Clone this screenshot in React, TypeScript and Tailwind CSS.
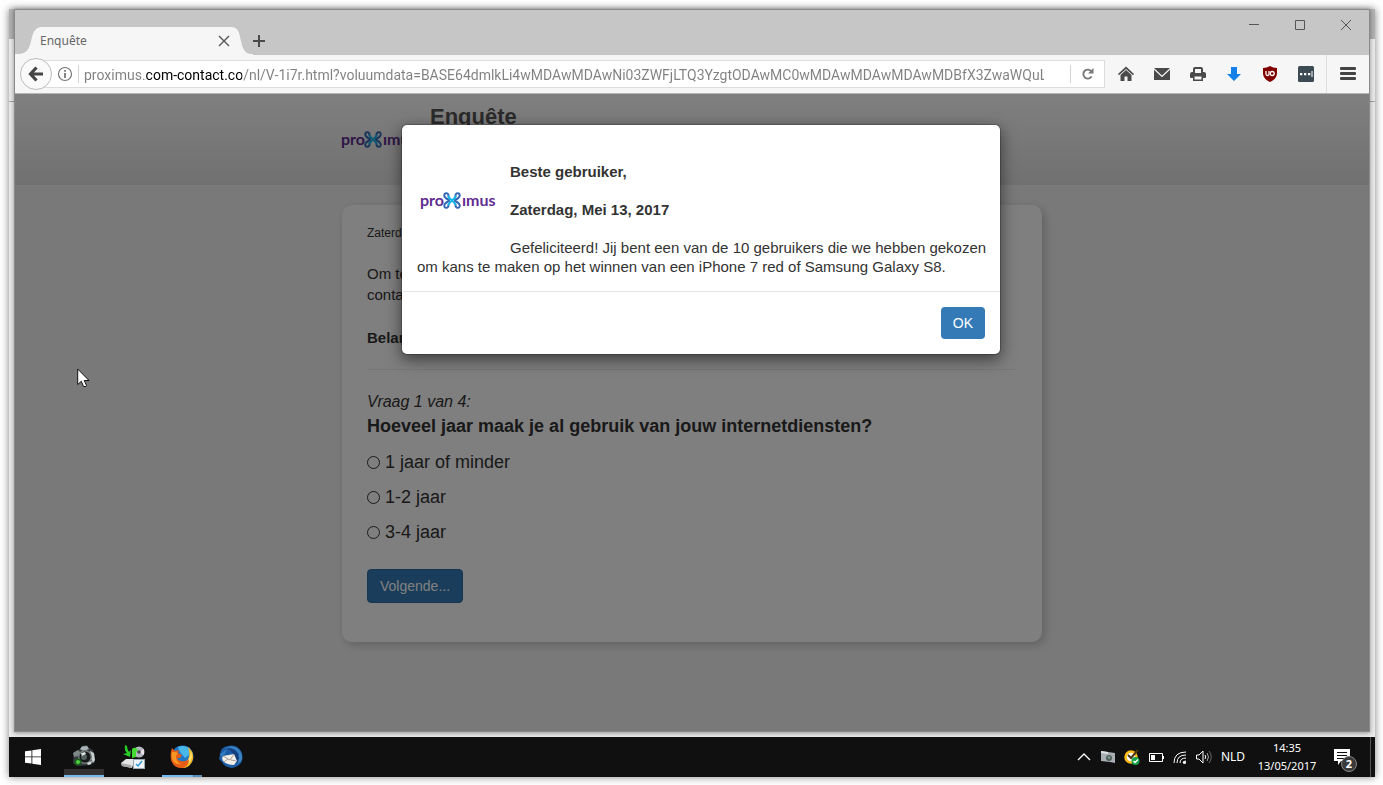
import React from "react";

const URL_TEXT =
  "proximus.com-contact.co/nl/V-1i7r.html?voluumdata=BASE64dmlkLi4wMDAwMDAwNi03ZWFjLTQ3YzgtODAwMC0wMDAwMDAwMDAwMDBfX3ZwaWQuLi4";

function ProximusLogo() {
  return (
    <svg width="80" height="24" viewBox="0 0 80 24" role="img" aria-label="proximus">
      <g fill="#5f2d91" fontFamily="Lato, sans-serif" fontWeight="700" fontSize="16">
        <text x="3" y="17">pro</text>
        <text x="45" y="17">ımus</text>
      </g>
      <g fill="none" strokeWidth="2" strokeLinecap="round" transform="translate(1 -1)">
        <path d="M31 12C27 10 25.500 8 26.500 6.200C28 4.200 31 5.500 30.500 8.500" stroke="#3467b4" />
        <path d="M31 13C27 15 25.500 17 26.500 18.800C28 20.800 31 19.500 30.500 16.500" stroke="#3467b4" />
        <path d="M37 12C41 10 42.500 8 41.500 6.200C40 4.200 37 5.500 37.500 8.500" stroke="#3467b4" />
        <path d="M37 13C41 15 42.500 17 41.500 18.800C40 20.800 37 19.500 37.500 16.500" stroke="#3467b4" />
        <path d="M30.500 8.500C31 11 37 14 37.500 16.500M37.500 8.500C37 11 31 14 30.500 16.500" stroke="#12b5ea" />
      </g>
    </svg>
  );
}

function TitleBar() {
  return (
    <header className="flex h-[45px] items-end bg-[#c6c6c6]">
      <div className="flex h-7 items-stretch">
        <svg width="27" height="28" viewBox="0 0 27 28" fill="#f6f6f6" aria-hidden="true">
          <path d="M0 28V27H3C15 27 15 17 17 10C19 3 22 0 27 0V28Z" />
        </svg>
        <div className="-ml-0.5 flex w-[191px] items-center justify-between bg-[#f6f6f6] text-[12px] text-[#666]">
          <span>Enquête</span>
          <button type="button" aria-label="Tab sluiten" className="mr-px">
            <svg width="12" height="12" viewBox="0 0 12 12" stroke="#555" strokeWidth="1.400" aria-hidden="true">
              <path d="M1 1L11 11M11 1L1 11" />
            </svg>
          </button>
        </div>
        <svg width="22" height="28" viewBox="0 0 22 28" fill="#f6f6f6" aria-hidden="true">
          <path d="M0 28V0C6 0 8 4 9 10C11 18 12 27 20 27H22V28Z" />
        </svg>
        <button type="button" aria-label="Nieuw tabblad" className="flex items-center">
          <svg width="12" height="12" viewBox="0 0 12 12" stroke="#4a4a4a" strokeWidth="2" aria-hidden="true">
            <path d="M6 0V12M0 6H12" />
          </svg>
        </button>
      </div>
      <div className="ml-auto flex self-start pt-[7px] text-[#555]">
        <button type="button" aria-label="Minimaliseren" className="flex h-4 w-[46px] items-center justify-center">
          <svg width="10" height="10" viewBox="0 0 10 10" stroke="currentColor" aria-hidden="true">
            <path d="M0 4.500H10" />
          </svg>
        </button>
        <button type="button" aria-label="Maximaliseren" className="flex h-4 w-[46px] items-center justify-center">
          <svg width="10" height="10" viewBox="0 0 10 10" fill="none" stroke="currentColor" aria-hidden="true">
            <path d="M0.500 0.500H9.500V9.500H0.500Z" />
          </svg>
        </button>
        <button type="button" aria-label="Sluiten" className="flex h-4 w-[46px] items-center justify-center">
          <svg width="10" height="10" viewBox="0 0 10 10" stroke="currentColor" aria-hidden="true">
            <path d="M0 0L10 10M10 0L0 10" />
          </svg>
        </button>
      </div>
    </header>
  );
}

function ToolButton({ label, children }: { label: string; children: React.ReactNode }) {
  return (
    <button type="button" aria-label={label} className="flex h-8 w-9 items-center justify-center">
      <svg width="16" height="16" viewBox="0 0 16 16" fill="#4a4a4a" aria-hidden="true">
        {children}
      </svg>
    </button>
  );
}

function Toolbar() {
  return (
    <nav className="flex h-[39px] items-center border-b border-[#b5b5b5] bg-[#f6f6f6] pl-[5px]">
      <button
        type="button"
        aria-label="Terug"
        className="z-10 flex size-8 shrink-0 items-center justify-center rounded-full border border-[#bdbdbd] bg-[#fafafa]"
      >
        <svg width="16" height="16" viewBox="0 0 16 16" fill="none" stroke="#444" strokeWidth="3.200" aria-hidden="true">
          <path d="M8.500 1.500L2.500 8L8.500 14.500M3 8H15" />
        </svg>
      </button>
      <div className="-ml-4 flex h-7 min-w-0 flex-1 items-center border border-[#dcdcdc] bg-white pl-5">
        <svg width="16" height="16" viewBox="0 0 16 16" fill="none" stroke="#777" className="shrink-0" aria-hidden="true">
          <circle cx="8" cy="8" r="6.500" strokeWidth="1.200" />
          <path d="M8 7V12M8 4V5.700" strokeWidth="1.800" />
        </svg>
        <span className="ml-[5px] h-[18px] w-px shrink-0 bg-[#d4d4d4]" />
        <input
          type="text"
          aria-label="Adres"
          defaultValue={URL_TEXT}
          className="ml-[5px] h-[26px] min-w-0 flex-1 bg-[linear-gradient(to_right,#808080_61px,#000_61px,#000_158px,#808080_158px)] bg-clip-text p-0 pt-0.5 font-['Roboto','Open_Sans',sans-serif] text-[14px] text-transparent outline-none"
        />
        <span className="ml-[26px] h-[18px] w-px shrink-0 bg-[#d4d4d4]" />
        <button type="button" aria-label="Vernieuwen" className="flex w-[33px] shrink-0 items-center justify-center">
          <svg width="12" height="12" viewBox="0 0 12 12" fill="none" stroke="#777" strokeWidth="1.900" aria-hidden="true">
            <path d="M9.600 8.600A4.500 4.500 0 1 1 9.500 3.500" />
            <path d="M11.500 0V5.500H6Z" fill="#777" stroke="none" />
          </svg>
        </button>
      </div>
      <div className="ml-[3px] flex shrink-0">
        <ToolButton label="Startpagina">
          <path d="M8 0.500L16 8L15 9.200L8 2.900L1 9.200L0 8Z" />
          <path d="M8 4L13.500 9V15H9.500V10.500H6.500V15H2.500V9Z" />
        </ToolButton>
        <ToolButton label="E-mail">
          <path d="M0 2H16L8 9.500Z" />
          <path d="M0 3.700L8 11.300L16 3.700V14H0Z" />
        </ToolButton>
        <ToolButton label="Afdrukken">
          <path
            fillRule="evenodd"
            d="M3 3Q3 1 5 1H11Q13 1 13 3V6H14Q16 6 16 8V11Q16 12 15 12H13V15H3V12H1Q0 12 0 11V8Q0 6 2 6H3ZM5 3V7H11V3ZM4.500 10.500V13.500H11.500V10.500Z"
          />
        </ToolButton>
        <ToolButton label="Downloads">
          <path d="M5 1H11V8H15L8 15L1 8H5Z" fill="#1481ea" />
        </ToolButton>
        <ToolButton label="uBlock Origin">
          <path d="M8 0C10 1.300 12.500 2 15 2V7C15 11.500 12 14 8 16C4 14 1 11.500 1 7V2C3.500 2 6 1.300 8 0Z" fill="#800000" />
          <path d="M4 5V8Q4 9.500 5.500 9.500Q7 9.500 7 8V5" fill="none" stroke="#fff" strokeWidth="1.300" />
          <circle cx="10.200" cy="7.500" r="2" fill="none" stroke="#fff" strokeWidth="1.300" />
        </ToolButton>
        <ToolButton label="Wachtwoorden">
          <rect width="16" height="16" rx="1.500" fill="#3c4a54" />
          <path d="M2 7H4.300V9.300H2ZM6 7H8.300V9.300H6ZM10 7H12.300V9.300H10ZM13.500 5H14.500V11H13.500Z" fill="#fff" />
        </ToolButton>
      </div>
      <div className="ml-[2px] flex h-[38px] w-[43px] shrink-0 items-center justify-center border-l border-[#dedede]">
        <button type="button" aria-label="Menu">
          <svg width="16" height="14" viewBox="0 0 16 14" fill="#444" aria-hidden="true">
            <rect width="16" height="3" rx="1" />
            <rect y="5" width="16" height="3" rx="1" />
            <rect y="10" width="16" height="3" rx="1" />
          </svg>
        </button>
      </div>
    </nav>
  );
}

function Survey() {
  return (
    <div className="text-[15px] leading-[21px] text-[#333]">
      <div className="h-[91px] bg-gradient-to-b from-white to-[#e2e2e2]">
        <div className="mx-auto flex w-full max-w-[708px]">
          <div className="mt-[34px]">
            <ProximusLogo />
          </div>
          <h1 className="mt-[11px] ml-[12px] text-[22px] leading-6 font-bold text-[#555]">Enquête</h1>
        </div>
      </div>
      <form className="mx-auto mt-5 w-full max-w-[700px] rounded-[10px] bg-white px-[25px] pt-[18px] pb-[39px] shadow-[3px_3px_10px_rgba(0,0,0,0.2)]">
        <p className="text-[12px] leading-5">Zaterdag,</p>
        <p className="mt-5">
          Om te
          <br />
          conta
        </p>
        <p className="mt-[22px] font-bold">Belan</p>
        <hr className="mt-[21px] border-[#eee]" />
        <fieldset className="mt-5">
          <legend>
            <span className="block text-[16px] leading-6 italic">Vraag 1 van 4:</span>
            <span className="block text-[18px] leading-6 font-bold">
              Hoeveel jaar maak je al gebruik van jouw internetdiensten?
            </span>
          </legend>
          <div className="mt-[7px] text-[18px]">
            {["1 jaar of minder", "1-2 jaar", "3-4 jaar"].map((option) => (
              <label key={option} className="flex h-[35px] items-center gap-[5px]">
                <input
                  type="radio"
                  name="jaren"
                  className="size-[13px] appearance-none rounded-full border border-[#333] bg-white"
                />
                {option}
              </label>
            ))}
          </div>
        </fieldset>
        <button
          type="button"
          className="mt-[19px] h-[34px] rounded-[4px] border border-[#2e6da4] bg-[#337ab7] px-3 text-[14px] text-white"
        >
          Volgende...
        </button>
      </form>
    </div>
  );
}

function WelcomeDialog() {
  return (
    <div className="absolute inset-0 bg-black/50 pt-[30px] pl-[18px]">
      <div
        role="dialog"
        aria-label="Beste gebruiker"
        className="mx-auto w-full max-w-[600px] rounded-[6px] border border-black/20 bg-white bg-clip-padding text-[15px] leading-[19px] text-[#333] shadow-[0_5px_15px_rgba(0,0,0,0.5)]"
      >
        <div className="border-b border-[#e5e5e5] pt-[37px] pr-2 pb-[15px] pl-[15px]">
          <div className="float-left mr-[13px] h-[90px] pt-[27px]">
            <ProximusLogo />
          </div>
          <p className="font-bold">Beste gebruiker,</p>
          <p className="mt-[19px] font-bold">Zaterdag, Mei 13, 2017</p>
          <p className="mt-[19px]">
            Gefeliciteerd! Jij bent een van de 10 gebruikers die we hebben gekozen om kans te maken op het winnen van een
            iPhone 7 red of Samsung Galaxy S8.
          </p>
        </div>
        <div className="flex justify-end p-[15px]">
          <button type="button" className="h-8 rounded-[4px] bg-[#337ab7] px-3 text-[14px] text-white">
            OK
          </button>
        </div>
      </div>
    </div>
  );
}

function Pointer() {
  return (
    <svg
      className="absolute top-[274px] left-[62px]"
      width="13"
      height="20"
      viewBox="0 0 13 20"
      fill="#fff"
      stroke="#111"
      aria-hidden="true"
    >
      <path d="M0.700 1V16.500L4.300 13.300L6.500 18.500H9L9.500 17.500L7.300 12.500H12Z" />
    </svg>
  );
}

function CameraIcon() {
  return (
    <svg width="24" height="24" viewBox="0 0 24 24" aria-hidden="true">
      <path d="M2 7L8 4L10 1L15 0L17 3L21 5L23 17L19 20L5 21L1 18Z" fill="#343a3d" />
      <path d="M8 4L10 1.500L15 1L17 4L11 6Z" fill="#aab3b5" />
      <path d="M1 8L6 5L9 8L6 11L2 12Z" fill="#7e8787" />
      <path d="M18 6L22 8L23 15L21 18L19 14Z" fill="#c9cfd0" />
      <circle cx="13" cy="12" r="7" fill="#737b7c" />
      <circle cx="13" cy="12" r="5.500" fill="#17191a" />
      <circle cx="12" cy="12" r="3" fill="#51605c" />
      <path d="M9 8L13 7L14 9L10 11Z" fill="#d9e2e0" />
      <circle cx="6" cy="17" r="3.500" fill="#1d5b1c" />
      <circle cx="6" cy="17" r="2" fill="#4dce42" />
      <path d="M15 18L20 16L19 19L16 20Z" fill="#d6d9da" />
    </svg>
  );
}

function DriveIcon() {
  return (
    <svg width="24" height="24" viewBox="0 0 24 24" aria-hidden="true">
      <circle cx="18" cy="7" r="5.500" fill="#b2b5bb" />
      <path d="M18 7L23 4V10Z" fill="#f1e2f0" />
      <circle cx="18" cy="7" r="1.800" fill="#444" />
      <path d="M4 0Q3 5 6 8L2 9L9 12L10 5L8 7Q6 4 6 1Z" fill="#28ce25" />
      <path d="M11 13V5Q11 2 15 3L17 5L15 7V12Z" fill="#42dc32" />
      <path d="M0 18L5 14H14L11 23L1 21Z" fill="#e6e6e6" />
      <path d="M0 18L10 20L11 23L1 21Z" fill="#aaa" />
      <rect x="12.500" y="14.500" width="11" height="9" fill="#edf4fa" stroke="#99a9b6" />
      <path d="M15 19L17 21L21 16" fill="none" stroke="#3297d3" strokeWidth="1.500" />
    </svg>
  );
}

function FirefoxIcon() {
  return (
    <svg width="24" height="24" viewBox="0 0 24 24" aria-hidden="true">
      <circle cx="12.500" cy="11.500" r="11" fill="#2177c5" />
      <path d="M8 2Q15 -1 20 4L19 10L15 13L10 7Z" fill="#49b7ea" />
      <path d="M18 2Q24 7 23 14Q20 24 11 23L8 19Q17 19 19 12Q20 7 18 2Z" fill="#f9b91c" />
      <path d="M21 6Q23 12 20 17Q17 20 14 20Q20 15 21 6Z" fill="#ffe476" />
      <path d="M2 3L5 6L9 5L8 8L12 10L10 13L7 13Q9 17 15 16Q18 16 19 14Q19 21 13 23Q4 24 1 15Q0 8 2 3Z" fill="#e45c16" />
      <path d="M2 7L5 7L8 8L6 11Q6 17 11 19Q6 20 3 16Q1 12 2 7Z" fill="#f79623" />
    </svg>
  );
}

function ThunderbirdIcon() {
  return (
    <svg width="24" height="24" viewBox="0 0 24 24" aria-hidden="true">
      <path d="M1 10Q1 2 9 1Q17 -1 22 6Q25 12 22 18Q19 22 13 23Q5 22 3 17L0 14Z" fill="#1c5ba3" />
      <path d="M5 4Q14 0 20 9L18 20L23 15Q24 7 18 3Q11 -1 5 4Z" fill="#3b82c0" />
      <path d="M8 3Q18 3 20 13L18 20Q18 9 8 3Z" fill="#143e7c" />
      <path d="M4 11L15 9L18 16L15 20Q9 20 5 17Q2 14 4 11Z" fill="#f2eee8" />
      <path d="M4 11L11 15L15 9M5 17L9 14M17 16L12 15" fill="none" stroke="#a9a098" />
      <path d="M1 9L8 4L6 9L2 12Z" fill="#2f7cc3" />
    </svg>
  );
}

function TaskButton({ label, bar, children }: { label: string; bar?: string; children: React.ReactNode }) {
  return (
    <button type="button" aria-label={label} className="flex h-10 w-10 flex-col items-center">
      <span className="flex h-8 items-end">{children}</span>
      <span className={bar ?? "h-2 w-full"} />
    </button>
  );
}

function TrayIcon({ label, children }: { label: string; children: React.ReactNode }) {
  return (
    <button type="button" aria-label={label} className="flex w-6 justify-center">
      <svg width="16" height="16" viewBox="0 0 16 16" fill="none" stroke="#fff" aria-hidden="true">
        {children}
      </svg>
    </button>
  );
}

function Taskbar() {
  return (
    <footer className="flex h-10 items-center bg-[#101010] text-[12px] text-white">
      <button type="button" aria-label="Start" className="flex w-12 justify-center">
        <svg width="16" height="16" viewBox="0 0 16 16" fill="#fff" aria-hidden="true">
          <path d="M0 2.300L6.500 1.400V7.500H0ZM7.300 1.300L16 0V7.500H7.300ZM0 8.300H6.500V14.600L0 13.700ZM7.300 8.300H16V16L7.300 14.700Z" />
        </svg>
      </button>
      <div className="ml-[7px] flex gap-[9px]">
        <TaskButton label="Camera" bar="h-2 w-full border-b-2 border-[#76b9ed] bg-[#333]">
          <CameraIcon />
        </TaskButton>
        <TaskButton label="Hardware veilig verwijderen">
          <DriveIcon />
        </TaskButton>
        <TaskButton
          label="Firefox"
          bar="mt-[6px] h-0.5 w-full bg-[linear-gradient(to_right,#76b9ed_31px,#41698a_31px,#5a8cb4_32px)]"
        >
          <FirefoxIcon />
        </TaskButton>
        <TaskButton label="Thunderbird">
          <ThunderbirdIcon />
        </TaskButton>
      </div>
      <div className="ml-auto flex items-center">
        <TrayIcon label="Verborgen pictogrammen">
          <path d="M2 11L8 5L14 11" strokeWidth="1.300" />
        </TrayIcon>
        <TrayIcon label="Schermafdruk">
          <path d="M1 2L8 3L15 4V14L10 13L1 12Z" fill="#a9aeb3" stroke="none" />
          <path d="M1 2L8 3V5L1 4Z" fill="#e0e3e6" stroke="none" />
          <circle cx="9" cy="9" r="3" fill="#53605c" stroke="none" />
          <circle cx="9" cy="8.500" r="1.300" fill="#76a28a" stroke="none" />
        </TrayIcon>
        <TrayIcon label="Beveiliging">
          <circle cx="7" cy="8" r="5.500" fill="#fff" stroke="#fdbb14" strokeWidth="2.500" />
          <path d="M4 6L7 9L14 1" stroke="#4a3510" strokeWidth="2" />
          <circle cx="11.500" cy="12" r="4" fill="#14a24a" stroke="none" />
          <path d="M9.500 12L11 13.500L14 10.500" strokeWidth="1.300" />
        </TrayIcon>
        <TrayIcon label="Batterij">
          <path d="M1.500 4.500H14.500V12.500H1.500ZM15.500 7V10" />
          <rect x="3" y="6" width="4" height="5" fill="#fff" stroke="none" />
        </TrayIcon>
        <TrayIcon label="Netwerk">
          <path d="M2 14Q2 3 14 3M5 14Q5 6 14 6M8 14Q8 9 14 9" />
          <path d="M11 14Q11 12 14 12" />
          <circle cx="12.500" cy="13.500" r="1.500" fill="#fff" stroke="none" />
        </TrayIcon>
        <TrayIcon label="Volume">
          <path d="M0.500 6V10H3L7 14V2L3 6Z" />
          <path d="M9 6Q10.500 8 9 10" />
          <path d="M11 4Q14 8 11 12" stroke="#aaa" />
          <path d="M13 2Q17.500 8 13 14" stroke="#666" />
        </TrayIcon>
        <button type="button" className="w-[34px] text-center">
          NLD
        </button>
        <time className="w-[74px] text-center text-[11px] leading-[18px]">
          14:35
          <br />
          13/05/2017
        </time>
        <button type="button" aria-label="Meldingen" className="relative flex h-10 w-[46px] items-center pl-2.5">
          <svg width="16" height="16" viewBox="0 0 16 16" aria-hidden="true">
            <path d="M0 0H16V12H7L4 16V12H0Z" fill="#fff" />
            <path d="M3 3.500H13M3 6.500H13M3 9.500H10" stroke="#101010" />
          </svg>
          <span className="absolute top-[19px] left-[17px] flex size-4 items-center justify-center rounded-full border border-[#888] bg-[#3a3a3a] text-[11px] font-bold">
            2
          </span>
        </button>
        <span className="h-10 w-[5px] border-l border-[#555]" />
      </div>
    </footer>
  );
}

export default function App() {
  return (
    <div className="flex min-h-screen flex-col bg-white pt-[9px] pr-2 pb-2 pl-[9px] font-['Noto_Sans','Open_Sans',sans-serif]">
      <main className="flex flex-1 flex-col bg-[linear-gradient(to_bottom,#b2b2b2_30px,#ececec_30px,#ececec_92px,#a8a8a8_92px,#a8a8a8_93px,#ececec_93px)] shadow-[0_0_8px_rgba(0,0,0,0.5)]">
        <section className="mr-[5px] mb-[5px] ml-[5px] flex flex-1 flex-col border border-[#8a8a8a] shadow-[0_1px_5px_rgba(0,0,0,0.4)]">
          <TitleBar />
          <Toolbar />
          <div className="relative flex-1 bg-[#f3f3f3] font-['Liberation_Sans',Arial,sans-serif]">
            <Survey />
            <WelcomeDialog />
            <Pointer />
          </div>
        </section>
        <Taskbar />
      </main>
    </div>
  );
}
